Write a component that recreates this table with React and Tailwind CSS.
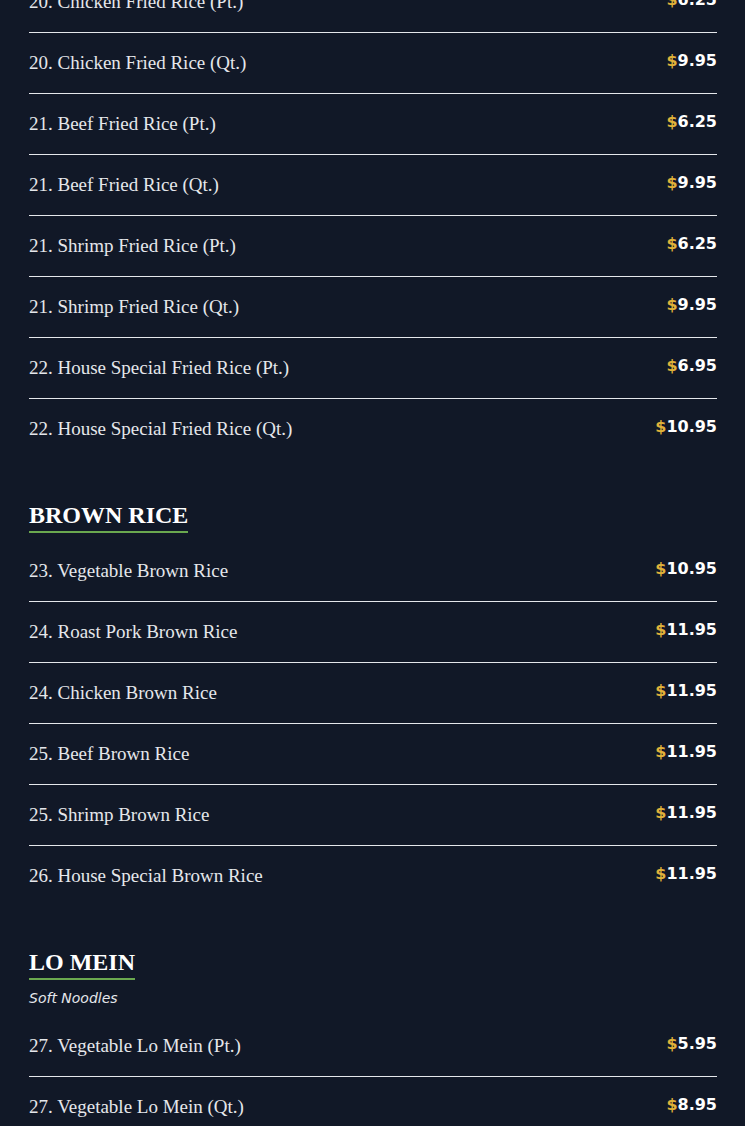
import React from 'react';

const sections = [
  {
    title: null,
    items: [
      ['20. Chicken Fried Rice (Pt.)', '6.25'],
      ['20. Chicken Fried Rice (Qt.)', '9.95'],
      ['21. Beef Fried Rice (Pt.)', '6.25'],
      ['21. Beef Fried Rice (Qt.)', '9.95'],
      ['21. Shrimp Fried Rice (Pt.)', '6.25'],
      ['21. Shrimp Fried Rice (Qt.)', '9.95'],
      ['22. House Special Fried Rice (Pt.)', '6.95'],
      ['22. House Special Fried Rice (Qt.)', '10.95'],
    ],
  },
  {
    title: 'BROWN RICE',
    items: [
      ['23. Vegetable Brown Rice', '10.95'],
      ['24. Roast Pork Brown Rice', '11.95'],
      ['24. Chicken Brown Rice', '11.95'],
      ['25. Beef Brown Rice', '11.95'],
      ['25. Shrimp Brown Rice', '11.95'],
      ['26. House Special Brown Rice', '11.95'],
    ],
  },
  {
    title: 'LO MEIN',
    subtitle: 'Soft Noodles',
    items: [
      ['27. Vegetable Lo Mein (Pt.)', '5.95'],
      ['27. Vegetable Lo Mein (Qt.)', '8.95'],
    ],
  },
];

const MenuRow = ({ name, price, last }) => (
  <div className={`flex justify-between items-start py-4 ${last ? '' : 'border-b border-gray-200'}`}>
    <span className="text-[19px] leading-7 text-gray-200 font-['Liberation_Serif',serif]">{name}</span>
    <span className="text-base leading-6 font-bold text-white font-['DejaVu_Sans',sans-serif]">
      <span className="text-[#e0b23a]">$</span>
      {price}
    </span>
  </div>
);

export default function App() {
  return (
    <div className="min-h-screen bg-[#111827] overflow-hidden">
      <div className="pl-[29px] pr-[28px] -mt-[28px]">
        {sections.map((section, si) => (
          <div key={si} className={si > 0 ? 'mt-10' : ''}>
            {section.title && (
              <div className="mb-2">
                <h2 className="inline-block text-2xl leading-8 font-bold text-white border-b-2 border-[#6aa84f] font-['Liberation_Serif',serif]">
                  {section.title}
                </h2>
                {section.subtitle && (
                  <p className="mt-2 text-sm leading-5 italic text-gray-200 font-['DejaVu_Sans',sans-serif]">
                    {section.subtitle}
                  </p>
                )}
              </div>
            )}
            {section.items.map(([name, price], i) => (
              <MenuRow key={name} name={name} price={price} last={i === section.items.length - 1} />
            ))}
          </div>
        ))}
      </div>
    </div>
  );
}
